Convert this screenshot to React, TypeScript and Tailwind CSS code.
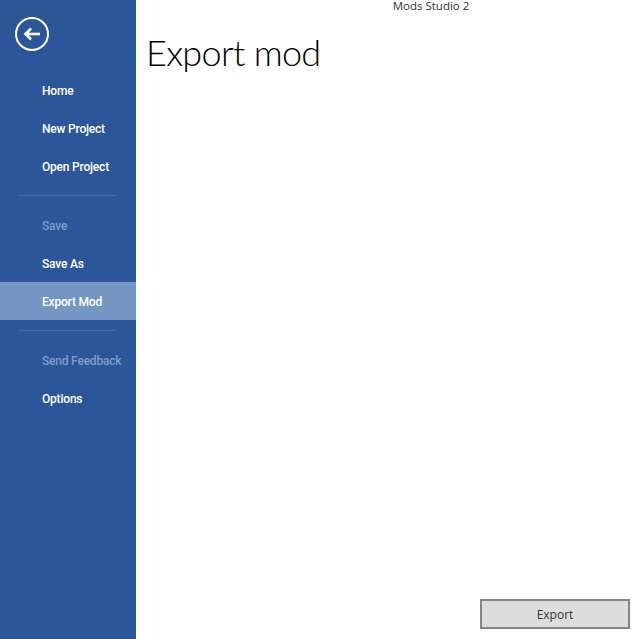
const font = "font-['Open_Sans','Noto_Sans',sans-serif]";

function NavItem({ label, active, disabled }: { label: string; active?: boolean; disabled?: boolean }) {
  return (
    <div
      className={`h-[38px] flex items-center pl-[42px] pt-[2px] font-['Roboto',sans-serif] text-[12px] tracking-[-0.2px] font-medium ${
        active ? "bg-[#7595c2] text-white" : disabled ? "text-[#7f9cc6]" : "text-white"
      }`}
    >
      {label}
    </div>
  );
}

function Divider() {
  return <div className="h-px bg-[#416aa6] ml-[18px] mr-[20px]" />;
}

export default function App() {
  return (
    <div className={`${font} w-[641px] h-[639px] flex bg-white overflow-hidden`}>
      {/* Backstage sidebar */}
      <div className="w-[136px] shrink-0 bg-[#2b579a] flex flex-col">
        <div className="pt-[17px] pl-[15px] h-[71px]">
          <div className="w-[34px] h-[34px] rounded-full border-[2px] border-white flex items-center justify-center">
            <svg width="18" height="14" viewBox="0 0 18 14" fill="none" stroke="white" strokeWidth="2.6">
              <path d="M17 7H3" />
              <path d="M8 1.5 2.5 7 8 12.5" />
            </svg>
          </div>
        </div>
        <NavItem label="Home" />
        <NavItem label="New Project" />
        <NavItem label="Open Project" />
        <div className="pt-[10px] pb-[10px]">
          <Divider />
        </div>
        <NavItem label="Save" disabled />
        <NavItem label="Save As" />
        <NavItem label="Export Mod" active />
        <div className="pt-[10px] pb-[10px]">
          <Divider />
        </div>
        <NavItem label="Send Feedback" disabled />
        <NavItem label="Options" />
      </div>

      {/* Main area */}
      <div className="flex-1 flex flex-col">
        <div className="h-[14px] flex justify-center text-[11.5px] leading-[12px] text-[#333333] pl-[85px]">
          Mods Studio 2
        </div>
        <h1 className="pl-[10px] pt-[14px] font-['Lato',sans-serif] text-[36px] leading-[48px] font-light tracking-[-0.7px] text-black">
          Export mod
        </h1>
        <div className="flex-1" />
        <div className="flex justify-end pr-[11px] pb-[10px]">
          <div className="w-[150px] h-[30px] pt-[1px] bg-[#dddddd] border-2 border-[#858585] flex items-center justify-center text-[12px] text-[#333333]">
            Export
          </div>
        </div>
      </div>
    </div>
  );
}
